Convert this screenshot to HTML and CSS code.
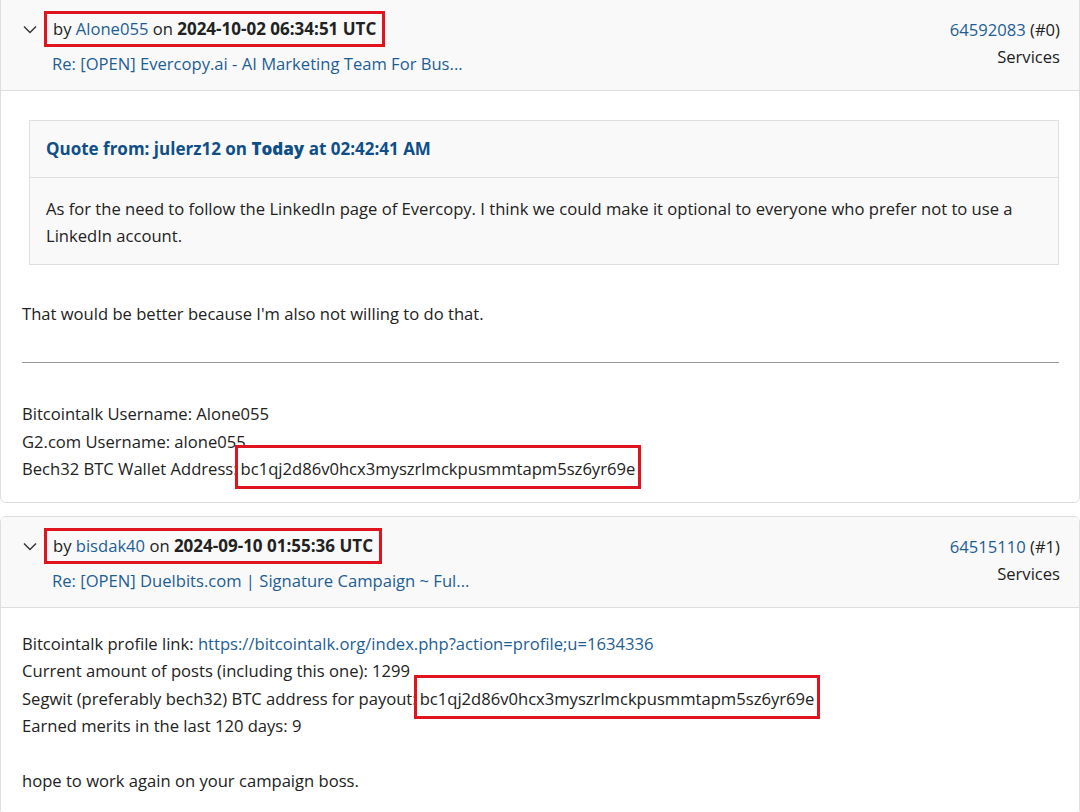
FILE: index.html
```html
<!DOCTYPE html>
<html lang="en">
<head>
    <meta charset="UTF-8">
    <meta name="viewport" content="width=device-width, initial-scale=1.0">
    <title>Posts</title>
    <link rel="stylesheet" href="styles.css">
</head>
<body>
    <!-- post #0 -->
    <div class="post first">
        <div class="head">
            <svg class="chev" width="14" height="9" viewBox="0 0 14 9"><polyline points="1,1.5 7,7.5 13,1.5" fill="none" stroke="#333" stroke-width="1.4"/></svg>
            <div class="meta">
                <div class="line1"><span class="mark">by <a href="#">Alone055</a> on <b>2024-10-02 06:34:51 UTC</b></span></div>
                <a class="topic" href="#">Re: [OPEN] Evercopy.ai - AI Marketing Team For Bus...</a>
            </div>
            <div class="side">
                <div><a href="#">64592083</a> (#0)</div>
                <div>Services</div>
            </div>
        </div>
        <div class="body">
            <div class="quote">
                <div class="qhead">Quote from: julerz12 on <b>Today</b> at 02:42:41 AM</div>
                <div class="qbody">As for the need to follow the LinkedIn page of Evercopy. I think we could make it optional to everyone who prefer not to use a LinkedIn account.</div>
            </div>
            <p class="reply">That would be better because I'm also not willing to do that.</p>
            <hr>
            <p class="sig">Bitcointalk Username: Alone055<br>
            G2.com Username: alone055<br>
            Bech32 BTC Wallet Address:<span class="addr">bc1qj2d86v0hcx3myszrlmckpusmmtapm5sz6yr69e</span></p>
        </div>
    </div>

    <!-- post #1 -->
    <div class="post">
        <div class="head">
            <svg class="chev" width="14" height="9" viewBox="0 0 14 9"><polyline points="1,1.5 7,7.5 13,1.5" fill="none" stroke="#333" stroke-width="1.4"/></svg>
            <div class="meta">
                <div class="line1"><span class="mark">by <a href="#">bisdak40</a> on <b>2024-09-10 01:55:36 UTC</b></span></div>
                <a class="topic" href="#">Re: [OPEN] Duelbits.com | Signature Campaign ~ Ful...</a>
            </div>
            <div class="side">
                <div><a href="#">64515110</a> (#1)</div>
                <div>Services</div>
            </div>
        </div>
        <div class="body second">
            <p class="sig">Bitcointalk profile link: <a href="#">https://bitcointalk.org/index.php?action=profile;u=1634336</a><br>
            Current amount of posts (including this one): 1299<br>
            Segwit (preferably bech32) BTC address for payout:<span class="addr">bc1qj2d86v0hcx3myszrlmckpusmmtapm5sz6yr69e</span><br>
            Earned merits in the last 120 days: 9<br>
            <br>
            hope to work again on your campaign boss.</p>
        </div>
    </div>
</body>
</html>
```

FILE: styles.css
```css
:root {
    --link: #1d5e95;
    --text: #222;
    --bc: #dedede;
    --bgc: #f9f9f9;
    --red: #e0141f;
}
* { box-sizing: border-box; }
body {
    margin: 0;
    font-family: "Open Sans", "Noto Sans", sans-serif;
    font-size: 16.6px;
    color: var(--text);
    background: #fff;
}
a { color: var(--link); text-decoration: none; }
b { font-weight: 700; font-size: 17px; }
.post {
    border: 1px solid var(--bc);
    border-radius: 6px;
    margin-top: 13px;
    overflow: hidden;
}
.post.first { margin-top: -1px; border-top-left-radius: 0; border-top-right-radius: 0; }
.head {
    display: flex;
    align-items: flex-start;
    background: var(--bgc);
    border-bottom: 1px solid var(--bc);
    padding: 11px 19px 12px 22px;
    height: 91px;
}
.chev { margin-top: 14px; width: 14px; flex: none; }
.meta { flex: 1; padding-left: 15px; }
.line1 { height: 36px; }
.mark {
    display: inline-block;
    border: 3px solid var(--red);
    padding: 0 6px;
    margin-left: -8px;
    line-height: 30px;
}
.topic { display: block; line-height: 27px; margin-top: 3px; }
.side { text-align: right; line-height: 27px; padding-top: 5px; }
.body { padding: 29px 20px 19px 21px; }
.body.second { padding-top: 22px; }
.quote {
    margin-left: 7px;
    border: 1px solid var(--bc);
    background: var(--bgc);
}
.qhead {
    color: #0f4f88;
    font-weight: 700;
    font-size: 17px;
    padding: 0 16px;
    line-height: 56px;
    border-bottom: 1px solid var(--bc);
}
.qhead b { font-weight: 800; }
.qbody { padding: 17px 16px 15px; line-height: 27px; }
.reply { margin: 35px 0 0; line-height: 27px; }
hr {
    border: 0;
    border-top: 1px solid #999;
    margin: 35px 0 0;
}
.sig { margin: 0; line-height: 27.5px; }
.body:not(.second) .sig { margin-top: 37px; }
.addr {
    border: 3px solid var(--red);
    margin-left: -3px;
    padding: 9px 3px 6px;
}
```
